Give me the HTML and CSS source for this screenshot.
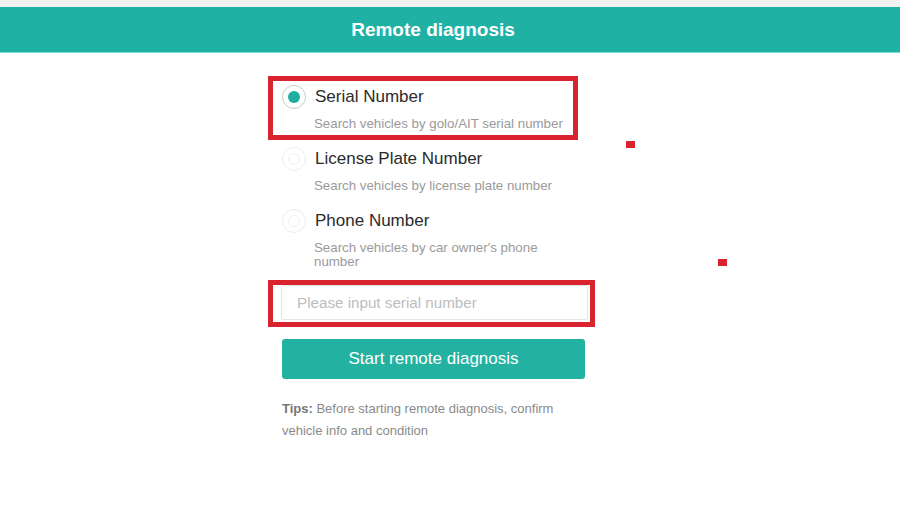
FILE: index.html
```html
<!DOCTYPE html>
<html lang="en">
<head>
<meta charset="utf-8">
<title>Remote diagnosis</title>
<link rel="stylesheet" href="styles.css">
</head>
<body>
<div class="topstrip"></div>
<header class="header"><h1 class="title">Remote diagnosis</h1></header>
<main class="page">
  <div class="form">
    <div class="option">
      <span class="radio radio-on"><span class="dot"></span></span>
      <div class="opt-text">
        <div class="opt-label">Serial Number</div>
        <div class="opt-desc">Search vehicles by golo/AIT serial number</div>
      </div>
    </div>
    <div class="option">
      <span class="radio radio-off"><span class="ring"></span></span>
      <div class="opt-text">
        <div class="opt-label">License Plate Number</div>
        <div class="opt-desc">Search vehicles by license plate number</div>
      </div>
    </div>
    <div class="option">
      <span class="radio radio-off"><span class="ring"></span></span>
      <div class="opt-text">
        <div class="opt-label">Phone Number</div>
        <div class="opt-desc">Search vehicles by car owner's phone number</div>
      </div>
    </div>
    <input class="input" type="text" placeholder="Please input serial number">
    <button class="btn" type="button">Start remote diagnosis</button>
    <p class="tips"><span class="tips-key">Tips:</span> Before starting remote diagnosis, confirm vehicle info and condition</p>
  </div>
  <div class="mark mark-option"></div>
  <div class="mark mark-input"></div>
  <div class="dotmark dot-a"></div>
  <div class="dotmark dot-b"></div>
</main>
</body>
</html>
```
FILE: styles.css
```css
html, body {
  margin: 0;
  padding: 0;
  background: #ffffff;
  font-family: "Liberation Sans", Arial, sans-serif;
}
.topstrip {
  height: 7px;
  background: #f1f1f1;
}
.header {
  height: 45px;
  background: #1fb1a4;
  border-bottom: 1px solid #7fdcd3;
  display: flex;
  align-items: center;
  justify-content: center;
}
.title {
  margin: 0;
  color: #ffffff;
  font-size: 19px;
  font-weight: bold;
  position: relative;
  left: -17px;
}
.page {
  position: relative;
  height: 463px;
}
.form {
  width: 303px;
  margin-left: 282px;
  padding-top: 32px;
}
.option {
  display: flex;
  align-items: flex-start;
  margin-bottom: 16px;
}
.radio {
  flex: none;
  width: 24px;
  height: 24px;
  box-sizing: border-box;
  border-radius: 50%;
  display: flex;
  align-items: center;
  justify-content: center;
  margin-right: 9px;
}
.radio-on {
  border: 1px solid #c4cfcd;
}
.radio-on .dot {
  width: 12px;
  height: 12px;
  border-radius: 50%;
  background: #1fae9f;
}
.radio-off {
  border: 1px solid #ececec;
}
.radio-off .ring {
  width: 12px;
  height: 12px;
  box-sizing: border-box;
  border-radius: 50%;
  border: 1px solid #f0f0f0;
}
.opt-text {
  flex: 1;
  min-width: 0;
  padding-right: 8px;
}
.opt-label {
  font-size: 17px;
  line-height: 24px;
  color: #2b2b2b;
}
.opt-desc {
  margin-top: 8px;
  margin-left: -1px;
  font-size: 13.3px;
  line-height: 14px;
  color: #9a9a9a;
}
.input {
  display: block;
  box-sizing: border-box;
  width: 307px;
  height: 35px;
  margin: 2px 0 0 -1px;
  border: 1px solid #e6e6e6;
  border-radius: 2px;
  padding: 0 15px;
  font-family: "Liberation Sans", Arial, sans-serif;
  font-size: 15.2px;
  color: #333;
  outline: none;
}
.input::placeholder {
  color: #bdbdbd;
}
.btn {
  display: block;
  width: 303px;
  height: 40px;
  margin-top: 19px;
  border: none;
  border-radius: 3px;
  background: #23b2a2;
  color: #ffffff;
  font-family: "Liberation Sans", Arial, sans-serif;
  font-size: 17px;
  padding: 0;
}
.tips {
  margin: 19px 0 0;
  font-size: 13px;
  line-height: 22px;
  color: #8a8a8a;
}
.tips-key {
  font-weight: bold;
  color: #777777;
}
.mark {
  position: absolute;
  box-sizing: border-box;
  border: 5px solid #d9232e;
}
.mark-option {
  left: 268px;
  top: 23px;
  width: 310px;
  height: 64px;
}
.mark-input {
  left: 268px;
  top: 227px;
  width: 327px;
  height: 47px;
}
.dotmark {
  position: absolute;
  background: #d9232e;
}
.dot-a {
  left: 626px;
  top: 88px;
  width: 9px;
  height: 7px;
}
.dot-b {
  left: 718px;
  top: 206px;
  width: 9px;
  height: 7px;
}
```
